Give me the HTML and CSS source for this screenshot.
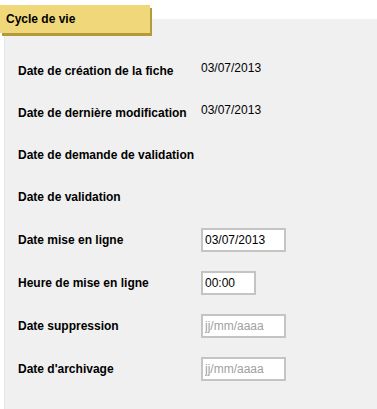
FILE: index.html
```html
<!DOCTYPE html>
<html lang="fr">

<head>
    <meta charset="UTF-8">
    <meta name="viewport" content="width=device-width, initial-scale=1.0">
    <title>Cycle de vie</title>
    <link rel="stylesheet" href="styles.css">
</head>

<body>
    <div class="section">
        <div class="tab">Cycle de vie</div>
        <div class="panel">
            <div class="row">
                <span class="label">Date de création de la fiche</span>
                <span class="value">03/07/2013</span>
            </div>
            <div class="row">
                <span class="label">Date de dernière modification</span>
                <span class="value">03/07/2013</span>
            </div>
            <div class="row">
                <span class="label">Date de demande de validation</span>
            </div>
            <div class="row">
                <span class="label">Date de validation</span>
            </div>
            <div class="row field-row">
                <span class="label">Date mise en ligne</span>
                <input type="text" class="field" value="03/07/2013">
            </div>
            <div class="row field-row">
                <span class="label">Heure de mise en ligne</span>
                <input type="text" class="field field-time" value="00:00">
            </div>
            <div class="row field-row">
                <span class="label">Date suppression</span>
                <input type="text" class="field" placeholder="jj/mm/aaaa">
            </div>
            <div class="row field-row">
                <span class="label">Date d'archivage</span>
                <input type="text" class="field" placeholder="jj/mm/aaaa">
            </div>
        </div>
    </div>
</body>

</html>
```

FILE: styles.css
```css
body {
    font-family: "Liberation Sans", Arial, sans-serif;
    font-size: 12px;
    color: #000;
    background: #fff;
    margin: 0;
}

.section {
    padding-top: 5px;
}

.tab {
    position: relative;
    z-index: 1;
    width: 144px;
    height: 28px;
    line-height: 28px;
    padding-left: 6px;
    font-weight: bold;
    background: #f0d87a;
    box-shadow: 2px 3px 0 #b39b3b;
}

.panel {
    margin-top: -14px;
    margin-left: 4px;
    padding: 31px 0 0 13px;
    min-height: 359px;
    background: #f0f0f0;
    border-left: 1px solid #e6e6e6;
}

.row {
    display: flex;
    align-items: center;
    height: 42px;
}

.row.field-row {
    height: 43px;
}

.label {
    width: 183px;
    font-weight: bold;
    flex-shrink: 0;
}

.value {
    margin-bottom: 6px;
}

.field {
    box-sizing: border-box;
    width: 85px;
    height: 24px;
    padding: 0 2px;
    border: 2px solid #c4c4c4;
    background: #fff;
    font-family: inherit;
    font-size: 12px;
    color: #000;
    outline: none;
}

.field-time {
    width: 55px;
}

.field::placeholder {
    color: #a0a0a0;
}
```
